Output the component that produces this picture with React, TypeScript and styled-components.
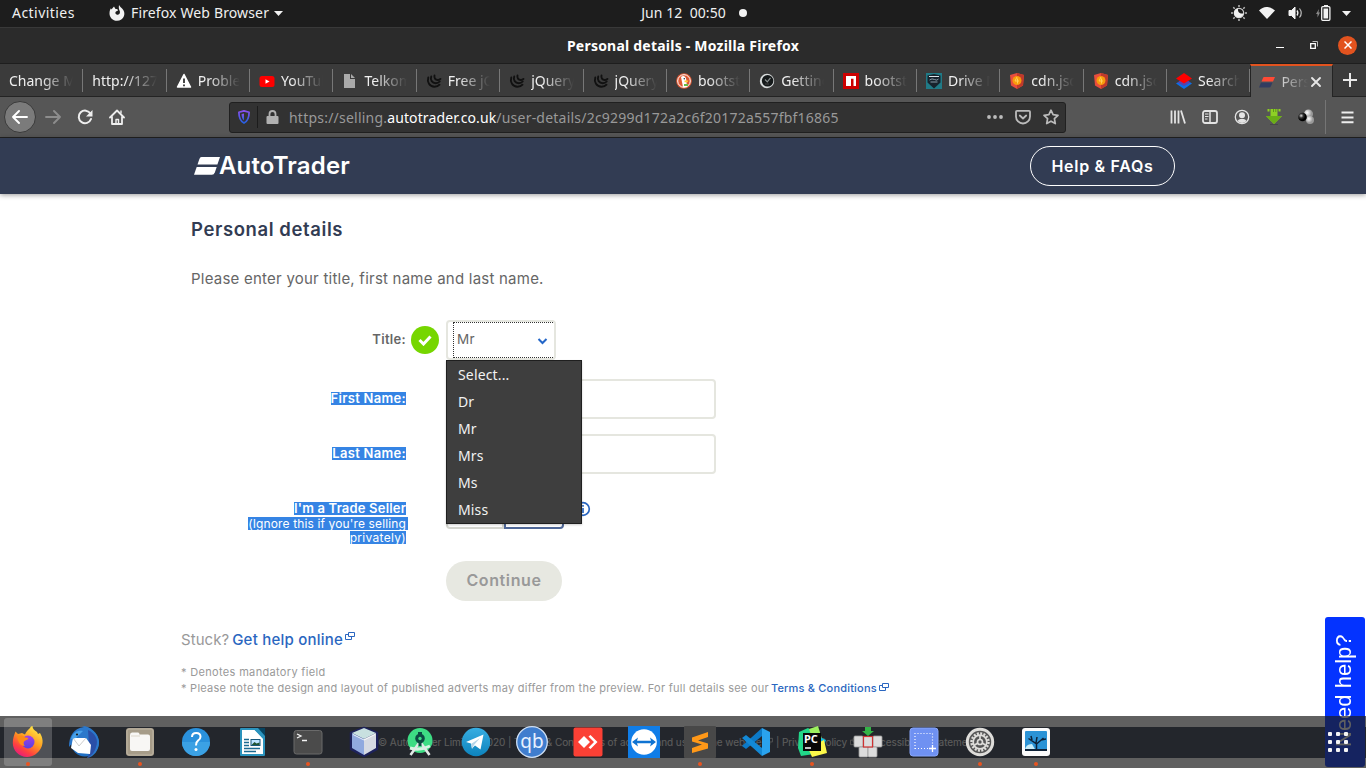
import React from "react";
import styled, { createGlobalStyle, css } from "styled-components";

const ui = `"Noto Sans", "Open Sans", sans-serif`;
const site = `Inter, Lato, sans-serif`;

const GlobalStyle = createGlobalStyle`
  *, *::before, *::after { box-sizing: border-box; }
  body { margin: 0; background: #fff; overflow: hidden; }
  h1, p { margin: 0; }
  svg { display: block; }
`;

const Desktop = styled.div`
  position: relative;
  display: flex;
  flex-direction: column;
  width: 1366px;
  height: 768px;
  overflow: hidden;
  font: 14px/20px ${ui};
  color: #f0f0f0;
`;

/* ---------- GNOME top bar ---------- */

const TopBar = styled.div`
  display: grid;
  grid-template-columns: 1fr auto 1fr;
  align-items: center;
  height: 28px;
  padding: 0 15px 1px 12px;
  background: #1d1d1d;
  border-bottom: 1px solid #393939;
`;

const TopGroup = styled.div<{ $end?: boolean }>`
  display: flex;
  align-items: center;
  justify-content: ${(p) => (p.$end ? "flex-end" : "flex-start")};
`;

const Activities = styled.span`
  width: 97px;
  letter-spacing: 0.45px;
`;

const AppName = styled.span`
  margin: 0 5px 0 6px;
  letter-spacing: 0.14px;
`;

const Clock = styled.span`
  margin-left: 66px;
  letter-spacing: 0.05px;
  white-space: pre;
`;

const NoticeDot = styled.span`
  width: 8px;
  height: 8px;
  margin: 0 41px 0 13px;
  border-radius: 50%;
  background: #f2f2f2;
`;

const TrayIcon = styled.span<{ $gap: number }>`
  margin-left: ${(p) => p.$gap}px;
`;

/* ---------- Window title ---------- */

const TitleBar = styled.div`
  display: grid;
  grid-template-columns: 1fr auto 1fr;
  align-items: center;
  height: 36px;
  padding-right: 9px;
  background: #2b2b2b;
  border-bottom: 1px solid #1e1e1e;
  font-weight: 700;
  color: #fff;
`;

const WindowTitle = styled.span`
  grid-column: 2;
  padding-left: 9px;
  letter-spacing: 0.22px;
`;

const WindowButtons = styled.div`
  display: flex;
  align-items: center;
  justify-content: flex-end;
`;

const MinimizeButton = styled.span`
  width: 8px;
  height: 1px;
  margin: 4px 26px 0 0;
  background: #fff;
`;

const RestoreButton = styled.span`
  margin: -1px 20px 0 0;
`;

const CloseButton = styled.span`
  display: grid;
  place-items: center;
  width: 19px;
  height: 19px;
  margin-top: -1px;
  border-radius: 50%;
  background: #e2531f;
`;

/* ---------- Tabs ---------- */

const TabStrip = styled.div`
  display: flex;
  height: 33px;
  background: #3b3b3b;
  border-bottom: 1px solid #242424;
`;

const Tab = styled.div<{ $active?: boolean }>`
  position: relative;
  display: flex;
  align-items: center;
  flex: none;
  width: 83.36px;
  padding: 2px 10px 0 9px;
  &::after {
    content: "";
    position: absolute;
    right: 0;
    top: 5px;
    width: 1px;
    height: 23px;
    background: #777;
  }
  ${(p) =>
    p.$active &&
    css`
      width: 83px;
      height: 33px;
      padding: 0 8px 0 8px;
      background: #565656;
      border-top: 2px solid #e2531f;
      border-left: 1px solid #242424;
      border-right: 1px solid #242424;
      color: #ccc;
      &::after { display: none; }
    `}
`;

const TabIcon = styled.span`
  flex: none;
  width: 16px;
  height: 16px;
  margin-right: 6px;
`;

const TabLabel = styled.span<{ $fade?: number }>`
  flex: 1;
  overflow: hidden;
  white-space: nowrap;
  mask-image: linear-gradient(to left, transparent 0, #000 ${(p) => p.$fade ?? 32}px);
`;

const NewTab = styled.span`
  margin: 9px 0 0 10px;
`;

/* ---------- Navigation bar ---------- */

const NavBar = styled.div`
  display: flex;
  align-items: center;
  height: 41px;
  padding-left: 4px;
  background: #565656;
  border-bottom: 1px solid #222;
`;

const BackButton = styled.span`
  display: grid;
  place-items: center;
  width: 32px;
  height: 32px;
  border-radius: 50%;
  border: 1px solid #3a3a3a;
  background: #7b7b7b;
`;

const NavIcon = styled.span<{ $gap: number }>`
  flex: none;
  margin-left: ${(p) => p.$gap}px;
`;

const UrlBar = styled.div`
  display: flex;
  align-items: center;
  flex: none;
  width: 837px;
  height: 31px;
  margin-left: 104px;
  padding: 0 6px 0 8px;
  background: #323232;
  border: 1px solid #202020;
  border-radius: 3px;
  color: #999;
`;

const UrlDivider = styled.span`
  width: 1px;
  height: 22px;
  margin: 0 8px 0 7px;
  background: #1c1c1c;
`;

const UrlText = styled.span`
  flex: 1;
  margin-left: 10px;
  padding-top: 2px;
  letter-spacing: 0.22px;
`;

const UrlHost = styled.span`
  color: #fff;
  letter-spacing: 0.11px;
`;

const NavDivider = styled.span`
  flex: none;
  width: 1px;
  height: 34px;
  margin: 0 15px 0 11px;
  background: #757575;
`;

/* ---------- Site ---------- */

const Page = styled.main`
  position: relative;
  display: flex;
  flex-direction: column;
  flex: 1;
  background: #fff;
  font-family: ${site};
  color: #666;
`;

const SiteHeader = styled.header`
  display: flex;
  align-items: center;
  justify-content: space-between;
  height: 56px;
  padding: 0 191px 0 194px;
  background: #323c53;
  box-shadow: 0 1px 5px rgba(0, 0, 0, 0.4);
  color: #fff;
`;

const Brand = styled.div`
  display: flex;
  align-items: center;
  font: 600 24px/28px ${site};
  letter-spacing: 0.15px;
`;

const HelpButton = styled.span`
  width: 145px;
  height: 40px;
  border: 1px solid #fff;
  border-radius: 20px;
  font: 600 16px/38px ${site};
  letter-spacing: 0.7px;
  text-align: center;
`;

const Heading = styled.h1`
  margin: 23px 0 0 191px;
  font: 600 18.5px/24px ${site};
  letter-spacing: 0.6px;
  color: #323c53;
`;

const Intro = styled.p`
  margin: 28px 0 0 191px;
  font-size: 15px;
  letter-spacing: 0.23px;
`;

const Form = styled.div`
  display: flex;
  flex-direction: column;
  margin-top: 31px;
`;

const Field = styled.div<{ $after?: number }>`
  display: grid;
  grid-template-columns: 406px 40px auto;
  height: 40px;
  margin-bottom: ${(p) => p.$after ?? 15}px;
`;

const Label = styled.div`
  padding-top: 10px;
  font: 600 13px/18px ${site};
  letter-spacing: 0.3px;
  text-align: right;
`;

const Highlight = styled.span<{ $small?: boolean }>`
  display: inline-block;
  height: 13px;
  line-height: 12px;
  background: #3584e4;
  color: #fff;
  white-space: nowrap;
  ${(p) =>
    p.$small &&
    css`
      font-weight: 400;
      font-size: 12px;
      line-height: 13px;
      letter-spacing: 0.13px;
    `}
`;

const FieldLabelHighlight = styled(Highlight)`
  margin-top: 1px;
`;

const TradeLabel = styled.div`
  display: flex;
  flex-direction: column;
  align-items: flex-end;
  padding-top: 13px;
  font: 600 13px/13px ${site};
  letter-spacing: 0.18px;
`;

const WideHighlight = styled(Highlight)`
  margin: 2px -2px 1px 0;
  padding-right: 2px;
`;

const LastHighlight = styled(Highlight)`
  letter-spacing: 0.3px;
`;

const Tick = styled.span`
  display: grid;
  place-items: center;
  width: 28px;
  height: 28px;
  margin: 6px 0 0 5px;
  border-radius: 50%;
  background: #76d600;
`;

const Select = styled.div`
  display: flex;
  width: 110px;
  height: 40px;
  padding: 0 1px 0 5px;
  border: 2px solid #e5e6df;
  border-radius: 4px;
`;

const SelectFocus = styled.div`
  display: flex;
  flex: 1;
  align-items: center;
  justify-content: space-between;
  padding: 0 5px 2px 3px;
  border: 1px dotted #333;
  border-right: 0;
  font-size: 13.5px;
  letter-spacing: 0.3px;
  svg { margin-top: 3px; }
`;

const Input = styled.div`
  width: 270px;
  height: 40px;
  border: 2px solid #e5e6df;
  border-radius: 4px;
`;

const Toggle = styled.div`
  display: flex;
  align-items: center;
  align-self: start;
  height: 40px;
`;

const ToggleSide = styled.span<{ $on?: boolean }>`
  width: ${(p) => (p.$on ? 60 : 58)}px;
  height: 40px;
  border: 2px solid ${(p) => (p.$on ? "#4f6797" : "#d4d5cf")};
  border-radius: ${(p) => (p.$on ? "0 4px 4px 0" : "4px 0 0 4px")};
`;

const Info = styled.span`
  margin-left: 11px;
`;

const Continue = styled.span`
  width: 116px;
  height: 40px;
  margin: 17px 0 0 446px;
  border-radius: 20px;
  background: #e7e8e1;
  color: #999;
  font: 600 16px/39px ${site};
  letter-spacing: 0.6px;
  text-align: center;
`;

const Options = styled.div`
  position: absolute;
  left: 446px;
  top: 222px;
  width: 136px;
  height: 164px;
  background: #3e3e3e;
  border: 1px solid #1f1f1f;
  box-shadow: 0 1px 2px rgba(0, 0, 0, 0.2);
  font: 14px/27px ${ui};
  color: #f2f2f2;
`;

const Option = styled.div`
  padding-left: 11px;
  letter-spacing: 0.15px;
`;

const Stuck = styled.p`
  display: flex;
  margin: 29px 0 0 181px;
  font-size: 15px;
  color: #999;
  letter-spacing: 0.05px;
`;

const Link = styled.span`
  display: inline-flex;
  font-weight: 500;
  color: #2a66c0;
`;

const StuckLink = styled(Link)`
  gap: 2px;
  margin-left: 3px;
  letter-spacing: 0.23px;
  svg { margin-top: 1px; }
`;

const Note = styled.p<{ $wide?: boolean }>`
  display: flex;
  margin-left: 181px;
  font-size: 11px;
  line-height: 16px;
  color: #999;
  letter-spacing: ${(p) => (p.$wide ? 0.33 : 0.25)}px;
`;

const Notes = styled.div`
  margin-top: 14px;
`;

const NoteLink = styled(Link)`
  gap: 2px;
  margin-left: 2px;
  letter-spacing: 0.19px;
  svg { margin-top: 2px; }
`;

const Footer = styled.footer`
  display: flex;
  align-items: center;
  height: 31px;
  margin-top: 31px;
  padding: 0 0 2px 378px;
  background: #323c53;
  color: #f4f4f0;
  font-size: 10px;
  letter-spacing: -0.07px;
  white-space: pre;
`;

const NeedHelp = styled.div`
  position: absolute;
  right: 1px;
  bottom: 1px;
  width: 40px;
  height: 150px;
  padding-top: 2px;
  border-radius: 3px;
  background: #0433ff;
  color: #fff;
  font: 22px/42px "Liberation Sans", Arial, sans-serif;
  text-align: center;
  writing-mode: vertical-lr;
  transform: rotate(180deg);
`;

/* ---------- Dock ---------- */

const Dock = styled.div`
  position: absolute;
  left: 0;
  right: 0;
  bottom: 0;
  display: flex;
  align-items: center;
  height: 52px;
  background: rgba(28, 28, 28, 0.7);
`;

const DockItem = styled.div<{ $running?: boolean; $active?: boolean }>`
  position: relative;
  display: grid;
  place-items: center;
  width: 48px;
  height: 48px;
  margin: 0 4px;
  border-radius: 3px;
  background: ${(p) => (p.$active ? "rgba(255,255,255,0.2)" : "transparent")};
  ${(p) =>
    p.$running &&
    css`
      &::after {
        content: "";
        position: absolute;
        left: 22px;
        bottom: 0;
        width: 4px;
        height: 4px;
        border-radius: 50%;
        background: #e95420;
      }
    `}
`;

const AppsGrid = styled.div`
  display: grid;
  grid-template-columns: repeat(3, 4px);
  gap: 4px;
  margin-left: 264px;
`;

const AppsDot = styled.span`
  width: 4px;
  height: 4px;
  border-radius: 1px;
  background: #f4f4f4;
`;

/* ---------- Drawings ---------- */

const Caret = () => (
  <svg width="9" height="5" viewBox="0 0 9 5"><path d="M0 0h9L4.500 5z" fill="#f2f2f2" /></svg>
);

const ExternalIcon = ({ size = 10, color = "#2a66c0" }) => (
  <svg width={size} height={size} viewBox="0 0 10 10" fill="none" stroke={color}>
    <path d="M3.500 1.500h6v4h-6z M3.500 3.500h-3v5h6v-3" />
  </svg>
);

const JQueryIcon = () => (
  <svg width="16" height="16" viewBox="0 0 16 16" fill="none" stroke="#111" strokeWidth="1.900" strokeLinecap="round">
    <path d="M2.300 4.500C.8 9 3.500 13.500 8.500 13.700c2.200 0 4-.8 5-2" />
    <path d="M5.200 3.500c-1.200 3.500 1 6.500 4.500 6.700 2 0 3.300-.8 4-1.700" />
    <path d="M8.500 2.500c-.6 2.400.8 4.300 3.200 4.500 1.300.1 2.200-.4 2.800-1.100" />
  </svg>
);

const WarnIcon = () => (
  <svg width="16" height="16" viewBox="0 0 16 16">
    <path d="M8 1.500 14.500 14h-13z" fill="#fff" stroke="#fff" strokeWidth="1.500" strokeLinejoin="round" />
    <path d="M8 5.500v4.500M8 11.500v1.800" stroke="#333" strokeWidth="1.800" />
  </svg>
);

const YouTubeIcon = () => (
  <svg width="16" height="16" viewBox="0 0 16 16">
    <rect x=".5" y="3" width="15" height="11" rx="2.500" fill="#f00" />
    <path d="m6.500 6.200 4 2.300-4 2.300z" fill="#fff" />
  </svg>
);

const FileIcon = () => (
  <svg width="16" height="16" viewBox="0 0 16 16">
    <path d="M2 1h6v5h5v9H2z" fill="#aaa" /><path d="M9 1v4h4z" fill="#aaa" />
  </svg>
);

const DuckIcon = () => (
  <svg width="16" height="16" viewBox="0 0 16 16">
    <circle cx="8" cy="8" r="7.800" fill="#de5833" />
    <circle cx="8" cy="8" r="6.300" fill="none" stroke="#fff" />
    <path d="M5 4c2-2 5-.6 5.200 2.300L11 14H7z" fill="#fff" />
    <path d="M8.500 7.500h4l-1 1.800h-3z" fill="#fc3" />
    <path d="M8 11h4v2H8z" fill="#65bc46" /><circle cx="8.300" cy="5.800" r=".8" fill="#234" />
  </svg>
);

const DialIcon = () => (
  <svg width="16" height="16" viewBox="0 0 16 16">
    <circle cx="8" cy="8" r="7.200" fill="#d8dcdc" />
    <circle cx="8.600" cy="7.800" r="5.800" fill="#15191a" />
    <path d="m6 6.500 2.300 2.300 3.200-4" fill="none" stroke="#8a9090" strokeWidth="1.200" />
    <path d="M6 11h4" stroke="#444" />
  </svg>
);

const NpmIcon = () => (
  <svg width="16" height="16" viewBox="0 0 16 16">
    <path d="M0 0h16v16H0z" fill="#c00" /><path d="M3 3h10v10h-2.500V5.800H8V13H3z" fill="#fff" />
  </svg>
);

const ShieldCrestIcon = () => (
  <svg width="16" height="16" viewBox="0 0 16 16">
    <path d="M0 0h16v16H0z" fill="#207a86" />
    <path d="M1.500 2.500 8 1l6.500 1.500v7L8 15.500l-6.500-6z" fill="#17232d" />
    <path d="M3 3.500h10" stroke="#dde4e8" fill="none" /><path d="M3.500 7q2.500-2 5-.5t4-.5M4.500 9h7" stroke="#8a9ca8" fill="none" />
  </svg>
);

const CdnIcon = () => (
  <svg width="16" height="16" viewBox="0 0 16 16">
    <path d="m8 0 7 2-1 10.500L8 16l-6-3.500L1 2z" fill="#e84d3d" />
    <path d="m8 0 7 2-1 10.500L8 16z" fill="#bf3a2b" />
    <circle cx="8" cy="7.500" r="4.500" fill="#f89b0c" />
    <path d="m8 4-2 4h4M8.500 5.500v5" stroke="#ffcf55" fill="none" />
  </svg>
);

const LayersIcon = () => (
  <svg width="16" height="16" viewBox="0 0 16 16">
    <path d="m8 5.500 8 5L8 16l-8-5.500z" fill="#0b6fe8" /><path d="m1.500 9.500 6.500-4 6.500 4L8 13z" fill="#5b42a8" /><path d="m8 0 8 5.500-8 5-8-5z" fill="#f00" />
  </svg>
);

const TraderIcon = () => (
  <svg width="16" height="16" viewBox="0 0 16 16">
    <path d="M5 3h11l-2 4.500H2.500L4 4q.3-1 1-1z" fill="#ff4a35" />
    <path d="M2 8.500h11.500L12 12q-.5 1.500-2 1.500H0z" fill="#323c60" />
  </svg>
);

const FirefoxGlyph = () => (
  <svg width="16" height="16" viewBox="0 0 16 16">
    <path d="M5 1.500 6.500 4C8 4 9 4.400 9 5.500L7 6.500c-1 .6-1 2.800 1 3.200 2.300.4 3.700-2 2.500-4.200C10 4.300 9.500 3.300 10 0c1 1.800 1.800 2.100 3.300 3.700C15 5.500 16 8 15 11c-1 3-3.800 4.800-7 4.800C3.800 15.800.5 12.500.5 8.500.5 6 1 4.600 2 3.300l.4 1.300z" fill="#f2f2f2" />
  </svg>
);

const BrightnessIcon = () => (
  <svg width="16" height="16" viewBox="0 0 16 16">
    <path d="M8 0v2M8 14v2M0 8h2M14 8h2M2.300 2.300l1.400 1.400M12.300 12.300l1.400 1.400M2.300 13.700l1.400-1.400M12.300 3.700l1.400-1.400" stroke="#bbb" strokeWidth="1.500" />
    <circle cx="8" cy="8" r="4.700" fill="none" stroke="#ccc" strokeWidth="1.200" />
    <path d="M7 3.500c-.5 3.500 1.500 5.500 5.500 5C12 11 10.500 12.500 8 12.500A4.500 4.500 0 0 1 7 3.500z" fill="#f2f2f2" />
  </svg>
);

const WifiIcon = () => (
  <svg width="16" height="12" viewBox="0 0 16 12"><path d="M0 3.500C5-1.200 11-1.200 16 3.500L8 12z" fill="#f2f2f2" /></svg>
);

const VolumeIcon = () => (
  <svg width="16" height="14" viewBox="0 0 16 14" fill="none" stroke="#f2f2f2">
    <path d="M1 4.500h2.500L7 1v12L3.500 9.500H1z" fill="#f2f2f2" />
    <path d="M9 4.500q1.800 2.500 0 5" strokeWidth="1.300" /><path d="M11.500 2.500q3.500 4.500 0 9" stroke="#bbb" strokeWidth="1.200" />
  </svg>
);

const BatteryIcon = () => (
  <svg width="15" height="16" viewBox="0 0 15 16">
    <path d="M3 4 0 9h1.500v3.500L4 7.500H2.500z" fill="#8a8a8a" />
    <path d="M8 0h4v2H8z" fill="#f2f2f2" /><rect x="5.700" y="1.700" width="8.200" height="13.600" rx="1" fill="none" stroke="#f2f2f2" strokeWidth="1.300" />
    <path d="M7.500 3.500h4.600v10H7.500z" fill="#f2f2f2" />
  </svg>
);

const ArrowIcon = ({ flip = false, color = "#fff" }) => (
  <svg width="16" height="16" viewBox="0 0 16 16" fill="none" stroke={color} strokeWidth="1.900" strokeLinecap="round" strokeLinejoin="round">
    <path d={flip ? "M1 8h14M9 2l6 6-6 6" : "M15 8H1M7 2 1 8l6 6"} />
  </svg>
);

const ReloadIcon = () => (
  <svg width="16" height="16" viewBox="0 0 16 16" fill="none" stroke="#eee" strokeWidth="2">
    <path d="M13.500 4.700A6.300 6.300 0 1 0 14 10" strokeLinecap="round" /><path d="M15.500 1v6.500H9z" fill="#eee" stroke="none" />
  </svg>
);

const HomeIcon = () => (
  <svg width="16" height="16" viewBox="0 0 16 16" fill="none" stroke="#eee" strokeWidth="1.800" strokeLinecap="round" strokeLinejoin="round">
    <path d="m1 8.500 7-7 7 7M3 8v7h10V8" /><path d="M7 15v-4.500h2.500V15M12 2v2" strokeWidth="1.400" />
  </svg>
);

const TrackingShield = () => (
  <svg width="12" height="14" viewBox="0 0 12 14">
    <defs><linearGradient id="shield" x2="0" y2="1"><stop stopColor="#8a50f0" /><stop offset="1" stopColor="#2460e0" /></linearGradient></defs>
    <path d="M6 .9 11.100 2.300c0 4.500-.6 8.500-5.100 10.800C1.500 10.800.9 6.800.9 2.300z" fill="none" stroke="url(#shield)" strokeWidth="1.700" strokeLinejoin="round" />
    <path d="M6 3.500v7C4 9 3.600 6.500 3.600 4z" fill="url(#shield)" />
  </svg>
);

const LockIcon = () => (
  <svg width="13" height="14" viewBox="0 0 13 14">
    <path d="M3.500 7V4a3 3 0 0 1 6 0v3" fill="none" stroke="#b1b1b1" strokeWidth="1.800" /><rect x=".5" y="6" width="12" height="8" rx="1" fill="#b1b1b1" />
  </svg>
);

const DotsIcon = () => (
  <svg width="16" height="16" viewBox="0 0 16 16" fill="#bbb"><circle cx="2" cy="8" r="1.900" /><circle cx="8" cy="8" r="1.900" /><circle cx="14" cy="8" r="1.900" /></svg>
);

const PocketIcon = () => (
  <svg width="16" height="16" viewBox="0 0 16 16" fill="none" stroke="#bbb" strokeWidth="1.800" strokeLinecap="round" strokeLinejoin="round">
    <path d="M2 1.800h12q1 0 1 1V7.500a7 7 0 0 1-14 0V2.800q0-1 1-1z" /><path d="m4.800 6.500 3.200 3 3.200-3" />
  </svg>
);

const StarIcon = () => (
  <svg width="16" height="16" viewBox="0 0 16 16" fill="none" stroke="#bbb" strokeWidth="1.700" strokeLinejoin="round">
    <path d="m8 1.200 2.100 4.500 4.900.6-3.600 3.400.9 4.900L8 12.200l-4.300 2.400.9-4.900L1 6.300l4.900-.6z" />
  </svg>
);

const LibraryIcon = () => (
  <svg width="16" height="16" viewBox="0 0 16 16" fill="none" stroke="#e3e3e3" strokeWidth="1.800">
    <path d="M1.500 1.500v13M5 1.500v13M8.500 1.500v13M11 1.500l4 13" />
  </svg>
);

const SidebarIcon = () => (
  <svg width="16" height="14" viewBox="0 0 16 14" fill="none" stroke="#e3e3e3">
    <rect x="1" y="1" width="14" height="12" rx="2" strokeWidth="1.800" /><path d="M8 1v12" strokeWidth="1.500" /><path d="M3 4h3.500M3 6.500h3.500M3 9h2.500" />
  </svg>
);

const AccountIcon = () => (
  <svg width="16" height="16" viewBox="0 0 16 16">
    <circle cx="8" cy="8" r="6.700" fill="none" stroke="#e3e3e3" strokeWidth="1.300" />
    <circle cx="8" cy="6.300" r="3" fill="#e3e3e3" /><path d="M3.500 12q1.200-2 3-2h3q1.800 0 3 2-2 2-4.500 2t-4.500-2z" fill="#e3e3e3" />
  </svg>
);

const DownloadArrow = () => (
  <svg width="16" height="16" viewBox="0 0 16 16">
    <path d="M1.500 0h2v2.500h-2zM12.500 0h2v2.500h-2zM4.500 0h7v7H16l-8 8-8-8h4.500z" fill="#8ed024" /><path d="M0 7h16l-8 8z" fill="#6aae16" /><path d="M7 0h.700v3H7z M9.500 0h.7v3h-.7z" fill="#4d7d18" /><path d="M4 15.500h8" stroke="#333" opacity=".4" />
  </svg>
);

const MoleculeIcon = () => (
  <svg width="16" height="16" viewBox="0 0 16 16">
    <defs>
      <radialGradient id="mw" cx=".35" cy=".35"><stop stopColor="#fff" /><stop offset="1" stopColor="#999" /></radialGradient>
      <radialGradient id="mb" cx=".35" cy=".35"><stop stopColor="#ddd" /><stop offset=".5" stopColor="#333" /><stop offset="1" stopColor="#000" /></radialGradient>
    </defs>
    <circle cx="10.500" cy="5" r="4.500" fill="url(#mw)" /><circle cx="12" cy="11" r="4" fill="url(#mw)" /><circle cx="4.500" cy="8" r="4.300" fill="url(#mb)" />
  </svg>
);

const MenuIcon = () => (
  <svg width="13" height="14" viewBox="0 0 13 14"><path d="M.5 2.500h12M.5 7.500h12M.5 12.300h12" stroke="#eee" strokeWidth="2" /></svg>
);

const BrandMark = () => (
  <svg width="25" height="18" viewBox="0 0 25 18" fill="#fff" overflow="visible">
    <path d="M7.500 0H26l-2.600 7.600H3.500L5.300 2.300Q6 0 7.500 0z" /><path d="M2.700 10h20l-1.800 5.200q-.9 2.500-3 2.500H0z" />
  </svg>
);

/* ---------- Dock drawings ---------- */

const Art = styled.svg.attrs({ viewBox: "0 0 32 32", width: 32, height: 32 })``;

const ArtText = styled.text<{ $size: number; $weight?: number }>`
  font-family: ${ui};
  font-size: ${(p) => p.$size}px;
  font-weight: ${(p) => p.$weight ?? 400};
`;

const Firefox = () => (
  <Art>
    <defs>
      <linearGradient id="ff" x1=".8" y1="0" x2=".2" y2="1"><stop stopColor="#fff04a" /><stop offset=".45" stopColor="#ff9a1f" /><stop offset=".75" stopColor="#ff4040" /><stop offset="1" stopColor="#e31587" /></linearGradient>
      <linearGradient id="fp" x2="0" y2="1"><stop stopColor="#a53fe8" /><stop offset="1" stopColor="#5542e0" /></linearGradient>
    </defs>
    <path d="M3.500 5.500 6 8l4-1 3 1.500c1-3 3.500-5 5-6.500.5-1 1-2 2.500-2 0 3 2 4 4.500 6l1 2 2-1c3 5 3.500 10 1 15-2.500 5-8 9-14 9C7 31 .8 24.500.8 17c0-4.500 1.200-8 2.700-11.500z" fill="url(#ff)" />
    <circle cx="16" cy="16" r="6.500" fill="url(#fp)" />
    <path d="M5 10c4-1 6-1 8 1.500 2 0 3.500 0 3.300 1.500l-3.800 2c-1.500 1.200-1 4 .5 5-4 0-7-3-8-10z" fill="#ff8a16" />
  </Art>
);

const Thunderbird = () => (
  <Art>
    <circle cx="17" cy="16.500" r="14" fill="#1f6fc4" />
    <path d="M1 21C1 11 5 2 16 1l-2-1c9 0 16 7 17 16 0 8-5 15-12 16 3-4 3-9 1-13L9 11z" fill="#2b78cb" />
    <path d="M20 4c7 3 11 10 8 17-1 5-5 9-9 11 3-4 3-9 2-13z" fill="#2b3d99" opacity=".7" />
    <path d="m5 12 13 0 5 7-1 9-12-1-7-5z" fill="#fff" /><path d="m5 12 6 8 7-8" fill="none" stroke="#ccc" />
    <path d="M3 13C5 6 10 4 15 5L8 12z" fill="#48a0e8" /><circle cx="9" cy="8.500" r="1.100" fill="#222" />
  </Art>
);

const Files = () => (
  <Art>
    <rect x="2" y="2" width="28" height="28" rx="3" fill="#a69c89" /><rect x="3" y="3" width="26" height="26" rx="2" fill="none" stroke="#beb5a4" />
    <path d="M6 9q0-2.500 2-2.500h6q1.500 0 1.500 2H24q2 0 2 2V23q0 2-2 2H8q-2 0-2-2z" fill="#f8f7f5" /><path d="M7 10h9" stroke="#ddd7cb" />
  </Art>
);

const HelpApp = () => (
  <Art>
    <circle cx="16" cy="16" r="14" fill="#2a91dc" /><path d="M2 16h28a14 14 0 0 1-28 0z" fill="#3ba1e4" />
    <path d="M12 11q0-4 4.200-4 4.300 0 4.300 3.700 0 2.300-2.500 4Q16 16 16 19.500" fill="none" stroke="#fff" strokeWidth="2" /><circle cx="16" cy="23.500" r="1.500" fill="#fff" />
  </Art>
);

const Writer = () => (
  <Art>
    <path d="M5 3h14l9 9v17H5z" fill="#fff" stroke="#2b93bd" strokeWidth="2" strokeLinejoin="round" /><path d="M17 2h12v13z" fill="#2b93bd" /><path d="M22 2h7v8z" fill="#07435f" />
    <path d="M8 13.500h5M8 16.500h5M8 19.500h5M8 22.500h16M8 25.500h12" stroke="#1b6a91" strokeWidth="1.400" /><rect x="15" y="13.500" width="9" height="6" fill="#bde3ff" stroke="#17577a" /><path d="m15.500 19 3-3 2 1.500 3-1V19z" fill="#253" />
  </Art>
);

const Terminal = () => (
  <Art>
    <rect x="2" y="4.500" width="28" height="23.500" rx="2.500" fill="#4b4b4b" stroke="#6a6a6a" />
    <path d="m5 8 4 2-4 2M10 14.500h5" fill="none" stroke="#f4f4f4" strokeWidth="1.300" />
  </Art>
);

const Cube = () => (
  <Art>
    <path d="m16 2 13 5v16l-13 7-13-7V7z" fill="#1c2167" stroke="#1c2167" strokeWidth="2.500" strokeLinejoin="round" opacity=".8" />
    <path d="m16 2 12 5-12 6L4 7z" fill="#c8e0e0" /><path d="m4 7 12 6v16L4 22z" fill="#90a9df" /><path d="m28 7-12 6v16l12-7z" fill="#d6dae3" />
    <path d="M5 8.500 16 14l11-5.500" fill="none" stroke="#fff" strokeWidth=".8" />
  </Art>
);

const AndroidStudio = () => (
  <Art>
    <circle cx="16" cy="14.500" r="12.500" fill="#3ddc84" />
    <path d="M6 22q10 3 20-2" fill="none" stroke="#d5f4e2" strokeWidth="3" />
    <path d="m15 17-8.500 12M17 17l8.500 12" stroke="#e1e8e6" strokeWidth="2.600" />
    <circle cx="16" cy="12.500" r="4.800" fill="#0c4a43" /><path d="M14 6h4v4h-4zM14.500 16h3v4h-3z" fill="#0c4a43" /><circle cx="16" cy="12.500" r="1.700" fill="#3ddc84" />
  </Art>
);

const Telegram = () => (
  <Art>
    <defs><linearGradient id="tg" x2="0" y2="1"><stop stopColor="#37aee2" /><stop offset="1" stopColor="#0d83bd" /></linearGradient></defs>
    <circle cx="16" cy="16" r="14.200" fill="url(#tg)" /><path d="m6 16 17.500-7.500-3 15-5.500-4-3 3-1-5z" fill="#fff" /><path d="m11 18 9-6-6 7-2 4z" fill="#b6d5e8" />
  </Art>
);

const QBittorrent = () => (
  <Art>
    <circle cx="16" cy="16" r="15.300" fill="#3f7dce" stroke="#cfe0f5" strokeWidth="1.300" />
    <ArtText $size={19} x="16" y="21.500" fill="#e8f1ff" textAnchor="middle">qb</ArtText>
  </Art>
);

const AnyDesk = () => (
  <Art>
    <rect x="1.500" y="1.500" width="29" height="29" rx="2" fill="#fb4035" /><path d="m12 10 6 6-6 6-6-6z" fill="#fff" />
    <path d="m16.500 10.500 2-1.500 7 7-7 7-2-1.500 5.500-5.500z" fill="#fff" />
  </Art>
);

const TeamViewer = () => (
  <Art>
    <rect width="32" height="32" fill="#0f7de8" /><circle cx="16" cy="16" r="12.800" fill="#fff" />
    <path d="m4 16 6-4.500-1 3.200h14l-1-3.200 6 4.500-6 4.500 1-3.200H9l1 3.200z" fill="#0f73d2" />
  </Art>
);

const Sublime = () => (
  <Art>
    <rect width="32" height="32" rx="1" fill="#484848" />
    <path d="m8 11.500 16-5.500v5l-10 3.500 10 3v5L8 27v-5l10-3.500-10-3z" fill="#ff9818" />
  </Art>
);

const VSCode = () => (
  <Art>
    <path d="m22 2 8 4v20l-8 4z" fill="#2aa3ee" /><path d="M22 2v8L6 23l-4-3z" fill="#0c79c6" /><path d="M22 30v-8L6 9l-4 3z" fill="#1389d6" />
  </Art>
);

const PyCharm = () => (
  <Art>
    <path d="m3 6 9-4 12 8-6 18-13 2-3-8z" fill="#21d789" /><path d="m13 3 9-3 4 13-6 10z" fill="#9cef5e" /><path d="m19 9 11 5-5 12z" fill="#14c0df" /><path d="m12 22 16-8 3 13-15 4z" fill="#fcf84a" />
    <rect x="7" y="7" width="18" height="18" fill="#080808" />
    <ArtText $size={11} $weight={700} x="8" y="17" fill="#fff">PC</ArtText><path d="M9 22h6" stroke="#fff" strokeWidth="1.500" />
  </Art>
);

const Keyboard = () => (
  <Art>
    <g fill="#dcdcdc" stroke="#999" strokeWidth=".8"><rect x="2" y="10" width="9" height="11" rx="1" /><rect x="21" y="10" width="9" height="11" rx="1" /><rect x="7" y="21" width="9" height="10" rx="1" /><rect x="16" y="21" width="9" height="10" rx="1" /></g>
    <rect x="11.500" y="10.500" width="9" height="10.500" fill="#ddd" stroke="#cf3232" strokeWidth="1.200" /><path d="M13 1h6v4h3l-6 5-6-5h3z" fill="#33b447" />
  </Art>
);

const Screenshot = () => (
  <Art>
    <rect x="2" y="2" width="28" height="28" rx="3" fill="#6f91f2" stroke="#88a5fa" /><path d="M7 23V7.500h17.500V20M7 22.500h14" fill="none" stroke="#fff" strokeDasharray="1 2" strokeWidth="1.200" /><path d="M21 22.500h7M24.500 19v7" stroke="#fff" strokeWidth="1.300" />
  </Art>
);

const Settings = () => (
  <Art>
    <circle cx="16" cy="16" r="12.700" fill="#555" stroke="#deddda" strokeWidth="3" />
    <circle cx="16" cy="16" r="8.500" fill="none" stroke="#deddda" strokeWidth="2.500" strokeDasharray="2 1.330" /><circle cx="16" cy="16" r="6.800" fill="none" stroke="#deddda" strokeWidth="1.700" />
    <circle cx="16" cy="16" r="2.500" fill="none" stroke="#deddda" strokeWidth="1.700" /><path d="m16 9.500v4M10.500 19l3.500-2M21.500 19 18 17" stroke="#deddda" strokeWidth="1.700" />
  </Art>
);

const TreeApp = () => (
  <Art>
    <rect x="2" y="2" width="28" height="28" rx="3" fill="#fbfbfb" /><rect x="5" y="5" width="22" height="20" rx="1" fill="#2b93d6" /><path d="M5 25q0-7 7-7l4 7z" fill="#c7edfa" />
    <path d="M16.500 25v-7l-8-5.500M16.500 18l7-6M16 17l1-6M21 14l5-1M12 14l-1-4" fill="none" stroke="#0e2238" strokeWidth="1.500" /><path d="M5 24h22" stroke="#0e2238" strokeWidth="2" />
  </Art>
);

/* ---------- Data ---------- */

const tabs: { label: string; icon?: React.FC }[] = [
  { label: "Change My" },
  { label: "http://127.0" },
  { label: "Problem", icon: WarnIcon },
  { label: "YouTube", icon: YouTubeIcon },
  { label: "Telkom", icon: FileIcon },
  { label: "Free jQuery", icon: JQueryIcon },
  { label: "jQuery UI", icon: JQueryIcon },
  { label: "jQuery UI", icon: JQueryIcon },
  { label: "bootstrap", icon: DuckIcon },
  { label: "Getting", icon: DialIcon },
  { label: "bootstrap", icon: NpmIcon },
  { label: "Drive Me", icon: ShieldCrestIcon },
  { label: "cdn.jsdelivr", icon: CdnIcon },
  { label: "cdn.jsdelivr", icon: CdnIcon },
  { label: "Search ", icon: LayersIcon },
];

const dock: { art: React.FC; running?: boolean; active?: boolean }[] = [
  { art: Firefox, running: true, active: true },
  { art: Thunderbird },
  { art: Files, running: true },
  { art: HelpApp },
  { art: Writer },
  { art: Terminal, running: true },
  { art: Cube },
  { art: AndroidStudio },
  { art: Telegram },
  { art: QBittorrent },
  { art: AnyDesk },
  { art: TeamViewer },
  { art: Sublime, running: true },
  { art: VSCode },
  { art: PyCharm, running: true },
  { art: Keyboard },
  { art: Screenshot },
  { art: Settings, running: true },
  { art: TreeApp, running: true },
];

const titles = ["Select...", "Dr", "Mr", "Mrs", "Ms", "Miss"];

export default function App() {
  return (
    <Desktop>
      <GlobalStyle />
      <TopBar>
        <TopGroup>
          <Activities>Activities</Activities>
          <FirefoxGlyph />
          <AppName>Firefox Web Browser</AppName>
          <Caret />
        </TopGroup>
        <TopGroup>
          <Clock>{"Jun 12  00:50"}</Clock>
          <NoticeDot />
        </TopGroup>
        <TopGroup $end>
          <TrayIcon $gap={0}><BrightnessIcon /></TrayIcon>
          <TrayIcon $gap={12}><WifiIcon /></TrayIcon>
          <TrayIcon $gap={13}><VolumeIcon /></TrayIcon>
          <TrayIcon $gap={12}><BatteryIcon /></TrayIcon>
          <TrayIcon $gap={11}><Caret /></TrayIcon>
        </TopGroup>
      </TopBar>

      <TitleBar>
        <WindowTitle>Personal details - Mozilla Firefox</WindowTitle>
        <WindowButtons>
          <MinimizeButton />
          <RestoreButton>
            <svg width="8" height="8" viewBox="0 0 8 8" fill="none">
              <path d="M2.500 .5h5v5" stroke="#bbb" /><path d="M.7 2.700h4.600v4.600H.7z" stroke="#fff" strokeWidth="1.300" />
            </svg>
          </RestoreButton>
          <CloseButton>
            <svg width="8" height="8" viewBox="0 0 8 8"><path d="m.5.5 7 7M7.500.5l-7 7" stroke="#fff" strokeWidth="1.500" /></svg>
          </CloseButton>
        </WindowButtons>
      </TitleBar>

      <TabStrip>
        {tabs.map(({ label, icon: Icon }, i) => (
          <Tab key={i}>
            {Icon && <TabIcon><Icon /></TabIcon>}
            <TabLabel>{label}</TabLabel>
          </Tab>
        ))}
        <Tab $active>
          <TabIcon><TraderIcon /></TabIcon>
          <TabLabel $fade={25}>Personal</TabLabel>
          <svg width="16" height="16" viewBox="0 0 16 16"><path d="m4 4 8 8M12 4l-8 8" stroke="#e6e6e6" strokeWidth="1.900" strokeLinecap="round" /></svg>
        </Tab>
        <NewTab>
          <svg width="14" height="14" viewBox="0 0 14 14"><path d="M7 0v14M0 7h14" stroke="#e8e8e8" strokeWidth="2" /></svg>
        </NewTab>
      </TabStrip>

      <NavBar>
        <BackButton><ArrowIcon /></BackButton>
        <NavIcon $gap={9}><ArrowIcon flip color="#8d8d8d" /></NavIcon>
        <NavIcon $gap={16}><ReloadIcon /></NavIcon>
        <NavIcon $gap={16}><HomeIcon /></NavIcon>
        <UrlBar>
          <TrackingShield />
          <UrlDivider />
          <LockIcon />
          <UrlText>
            https://selling.<UrlHost>autotrader.co.uk</UrlHost>/user-details/2c9299d172a2c6f20172a557fbf16865
          </UrlText>
          <DotsIcon />
          <NavIcon $gap={12}><PocketIcon /></NavIcon>
          <NavIcon $gap={12}><StarIcon /></NavIcon>
        </UrlBar>
        <NavIcon $gap={104}><LibraryIcon /></NavIcon>
        <NavIcon $gap={16}><SidebarIcon /></NavIcon>
        <NavIcon $gap={16}><AccountIcon /></NavIcon>
        <NavIcon $gap={16}><DownloadArrow /></NavIcon>
        <NavIcon $gap={16}><MoleculeIcon /></NavIcon>
        <NavDivider />
        <MenuIcon />
      </NavBar>

      <Page>
        <SiteHeader>
          <Brand><BrandMark />AutoTrader</Brand>
          <HelpButton>Help &amp; FAQs</HelpButton>
        </SiteHeader>
        <Heading>Personal details</Heading>
        <Intro>Please enter your title, first name and last name.</Intro>
        <Form>
          <Field $after={19}>
            <Label>Title:</Label>
            <Tick>
              <svg width="14" height="12" viewBox="0 0 14 12"><path d="m1.500 6 4 4 7-7.500" fill="none" stroke="#fff" strokeWidth="3" /></svg>
            </Tick>
            <Select>
              <SelectFocus>
                Mr
                <svg width="11" height="9" viewBox="0 0 11 9"><path d="m1.500 3 4 4 4-4" fill="none" stroke="#2366c8" strokeWidth="2" /></svg>
              </SelectFocus>
            </Select>
          </Field>
          <Field><Label><FieldLabelHighlight>First Name:</FieldLabelHighlight></Label><span /><Input /></Field>
          <Field><Label><FieldLabelHighlight>Last Name:</FieldLabelHighlight></Label><span /><Input /></Field>
          <Field>
            <TradeLabel>
              <Highlight>I'm a Trade Seller</Highlight>
              <WideHighlight $small>(Ignore this if you're selling</WideHighlight>
              <LastHighlight $small>privately)</LastHighlight>
            </TradeLabel>
            <span />
            <Toggle>
              <ToggleSide />
              <ToggleSide $on />
              <Info>
                <svg width="16" height="16" viewBox="0 0 16 16" fill="none" stroke="#2a66c0" strokeWidth="1.700">
                  <circle cx="8" cy="8" r="6.300" /><path d="M8 7v5M8 4v1.700" />
                </svg>
              </Info>
            </Toggle>
          </Field>
          <Continue>Continue</Continue>
        </Form>
        <Stuck>Stuck?<StuckLink>Get help online<ExternalIcon /></StuckLink></Stuck>
        <Notes>
          <Note $wide>* Denotes mandatory field</Note>
          <Note>
            * Please note the design and layout of published adverts may differ from the preview. For full details see our
            <NoteLink>Terms &amp; Conditions<ExternalIcon /></NoteLink>
          </Note>
        </Notes>
        <Footer>
          {"© AutoTrader Limited 2020 | Terms & Conditions of access and use of the website "}
          <ExternalIcon size={9} color="#d8d8d4" />
          {" | Privacy Policy "}
          <ExternalIcon size={9} color="#d8d8d4" />
          {" | Accessibility Statement"}
        </Footer>
        <Options>
          {titles.map((t) => <Option key={t}>{t}</Option>)}
        </Options>
        <NeedHelp>Need help?</NeedHelp>
      </Page>

      <Dock>
        {dock.map(({ art: Icon, running, active }, i) => (
          <DockItem key={i} $running={running} $active={active}><Icon /></DockItem>
        ))}
        <AppsGrid>
          {Array.from({ length: 9 }, (_, i) => <AppsDot key={i} />)}
        </AppsGrid>
      </Dock>
    </Desktop>
  );
}
